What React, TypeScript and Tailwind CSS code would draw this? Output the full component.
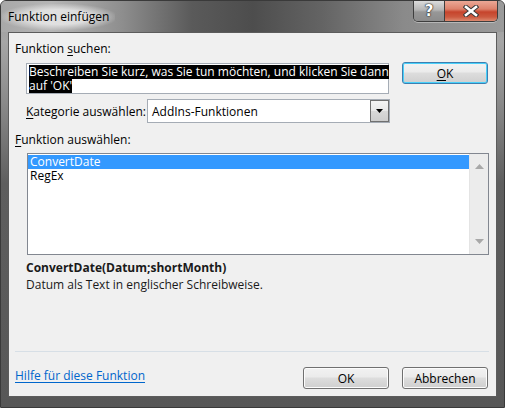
import React from "react";

const font = "font-['Open_Sans',sans-serif]";

function Btn({ children, focused }: { children: React.ReactNode; focused?: boolean }) {
  return (
    <div
      className={
        "h-[22px] w-[86px] flex items-center justify-center rounded-[3px] border text-[12px] leading-[15px] text-black bg-[linear-gradient(#f2f2f2_0%,#ebebeb_45%,#dddddd_50%,#cfcfcf_100%)] " +
        (focused
          ? "border-[#3c7fb1] shadow-[inset_0_0_0_1px_#48d0fa]"
          : "border-[#707070] shadow-[inset_0_0_0_1px_#fcfcfc]")
      }
    >
      {children}
    </div>
  );
}

export default function App() {
  return (
    <div className={"w-[505px] h-[408px] bg-white " + font}>
      <div className="w-[505px] h-[408px] flex flex-col rounded-t-[6px] border border-[#3a3a3a] bg-[linear-gradient(#9c9c9c_0%,#a6a6a6_10%,#8a8a8a_25%,#5e5e5e_45%,#575757_100%)]">
        {/* Title bar */}
        <div className="h-[31px] flex items-start rounded-t-[5px] bg-[linear-gradient(to_right,#a8a8a8_0%,#b6b6b6_10%,#8e8e8e_24%,#5a5a5a_38%,#4d4d4d_50%,#646464_64%,#8a8a8a_80%,#9a9a9a_100%)]">
          <span className="ml-[1px] mt-[3px] px-[6px] py-[5px] text-[12px] leading-[16px] text-black rounded-[10px] bg-[radial-gradient(ellipse_at_center,rgba(235,235,235,0.8)_40%,rgba(220,220,220,0)_75%)]">
            Funktion einfügen
          </span>
          <div className="ml-auto mr-[6px] flex h-[21px] rounded-b-[5px] border border-t-0 border-[#3e3e3e] overflow-hidden shadow-[0_1px_0_rgba(255,255,255,0.35)]">
            <div className="w-[31px] h-full flex items-center justify-center bg-[linear-gradient(#dcdcdc_0%,#b5b5b5_45%,#979797_55%,#8c8c8c_100%)] border-r border-[#3e3e3e]">
              <span className="text-[15px] font-bold leading-none text-white [text-shadow:0_0_1px_#222,0_0_1px_#222,0_0_2px_#444] font-['DejaVu_Sans',sans-serif]">
                ?
              </span>
            </div>
            <div className="w-[52px] h-full flex items-center justify-center bg-[linear-gradient(#eba896_0%,#dd826c_40%,#c6442c_55%,#cc5a40_80%,#dc8a70_100%)]">
              <svg width="16" height="12" viewBox="0 0 16 12">
                <path d="M3 2 L13 10 M13 2 L3 10" stroke="#3a3a3a" strokeWidth="4.6" strokeLinecap="square" />
                <path d="M3 2 L13 10 M13 2 L3 10" stroke="#ffffff" strokeWidth="2.6" strokeLinecap="square" />
              </svg>
            </div>
          </div>
        </div>

        {/* Client area */}
        <div className="ml-[7px] w-[489px] h-[365px] border border-[#5c5c5c] bg-[#f0f0f0] flex flex-col text-[12px] leading-[15px] text-black">
          <div className="mt-[8px] pl-[6px] h-[15px]">
            Funktion <span className="underline underline-offset-2">s</span>uchen:
          </div>

          <div className="mt-[6px] flex items-start">
            <div className="ml-[17px] mt-[1px] w-[363px] h-[31px] border border-[#a5acb5] bg-white pl-[2px] pt-[1px]">
              <div className="h-[14px] leading-[14px]">
                <span className="inline-block h-[14px] bg-black text-white whitespace-nowrap">
                  Beschreiben Sie kurz, was Sie tun möchten, und klicken Sie dann
                </span>
              </div>
              <div className="h-[14px] leading-[14px]">
                <span className="inline-block h-[14px] bg-black text-white whitespace-nowrap">auf 'OK'</span>
              </div>
            </div>
            <div className="ml-[13px]">
              <Btn focused>
                <span className="underline underline-offset-2">O</span>K
              </Btn>
            </div>
          </div>

          <div className="mt-[5px] flex items-center h-[24px]">
            <div className="pl-[17px] w-[138px] whitespace-nowrap">
              <span className="underline underline-offset-2">K</span>ategorie auswählen:
            </div>
            <div className="w-[243px] h-[24px] border border-[#a5acb5] bg-white flex items-stretch">
              <div className="flex-1 pl-[4px] flex items-center">AddIns-Funktionen</div>
              <div className="w-[19px] border border-[#707070] bg-[linear-gradient(#f4f4f4_0%,#e8e8e8_50%,#d8d8d8_51%,#cdcdcd_100%)] flex items-center justify-center">
                <svg width="7" height="4" viewBox="0 0 7 4">
                  <path d="M0 0 H7 L3.5 4 Z" fill="#000" />
                </svg>
              </div>
            </div>
          </div>

          <div className="mt-[9px] pl-[6px] h-[15px]">
            <span className="underline underline-offset-2">F</span>unktion auswählen:
          </div>

          <div className="mt-[6px] ml-[18px] w-[462px] h-[102px] border border-[#828790] bg-white flex">
            <div className="w-[441px] pt-[1px]">
              <div className="h-[14px] leading-[14px] pl-[2px] bg-[#3399ff] text-white">ConvertDate</div>
              <div className="h-[14px] leading-[14px] pl-[2px]">RegEx</div>
            </div>
            <div className="w-[19px] bg-[#ececec] border-l border-[#e4e4e4] flex flex-col items-center justify-between py-[10px]">
              <svg width="9" height="5" viewBox="0 0 9 5">
                <path d="M0 5 L4.5 0 L9 5 Z" fill="#a8a8a8" />
              </svg>
              <svg width="9" height="5" viewBox="0 0 9 5">
                <path d="M0 0 L9 0 L4.5 5 Z" fill="#a8a8a8" />
              </svg>
            </div>
          </div>

          <div className="mt-[5px] pl-[17px] h-[15px] font-bold text-[#1a1a1a]">ConvertDate(Datum;shortMonth)</div>
          <div className="mt-[2px] pl-[17px] h-[15px] text-[#1a1a1a]">Datum als Text in englischer Schreibweise.</div>

          <div className="mt-[59px] ml-[6px] w-[474px] h-[1px] bg-[#d7dfe6]" />

          <div className="mt-[15px] flex items-start">
            <a className="ml-[6px] mt-[1px] text-[#0066cc] underline underline-offset-2 cursor-pointer">
              Hilfe für diese Funktion
            </a>
            <div className="ml-auto mr-[8px] flex gap-[13px]">
              <Btn>OK</Btn>
              <Btn>Abbrechen</Btn>
            </div>
          </div>
        </div>
      </div>
    </div>
  );
}
